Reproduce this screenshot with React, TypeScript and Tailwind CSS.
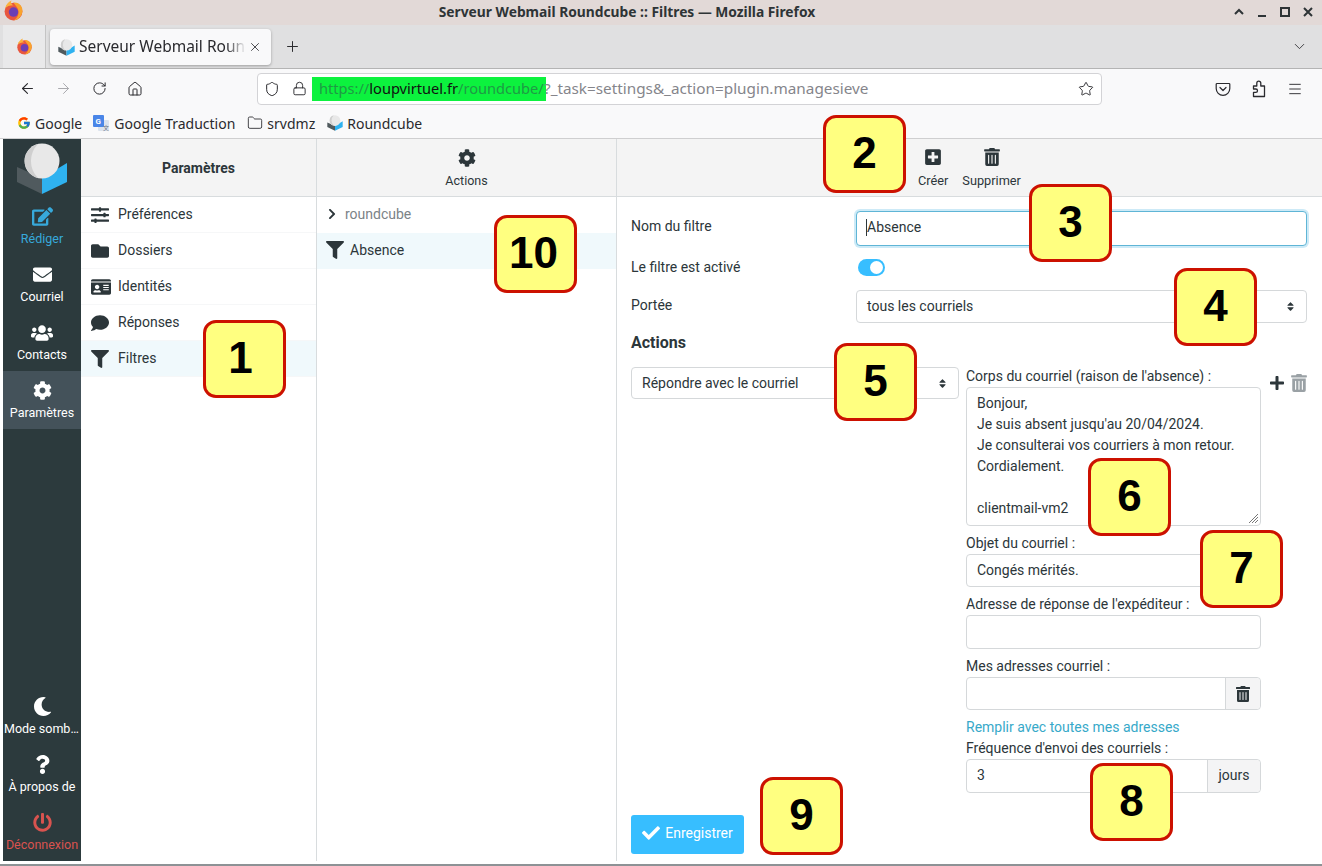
import type { ReactNode } from 'react';
import { ArrowLeft, ArrowRight, ChevronDown, Folder, Home, Lock, Menu, Plus, RotateCw, Shield, Star, X } from 'lucide-react';
import { FcGoogle } from 'react-icons/fc';
import {
    FaCheck,
    FaChevronRight,
    FaCog,
    FaComment,
    FaEdit,
    FaEnvelope,
    FaFilter,
    FaFolder,
    FaIdCard,
    FaMoon,
    FaPlus,
    FaPlusSquare,
    FaPowerOff,
    FaQuestion,
    FaSlidersH,
    FaSort,
    FaTrashAlt,
    FaUsers,
} from 'react-icons/fa';

const CubeLogo = ({ size }: { size: number }) => (
    <svg width={size} height={size} viewBox="0 0 52 52">
        <path d="M1 24 L26 35 L26 51 L1 39 Z" fill="#505a5e" />
        <path d="M51 20 L26 35 L26 51 L51 39 Z" fill="#2fb2f0" />
        <circle cx="26" cy="18" r="17.5" fill="#e8e8e8" />
        <path d="M22 1 A17.5 17.5 0 0 0 22 35 A24 24 0 0 1 22 1 Z" fill="#cfcfcf" />
    </svg>
);

const FirefoxLogo = ({ size }: { size: number }) => (
    <svg width={size} height={size} viewBox="0 0 20 20">
        <circle cx="10" cy="11" r="8.5" fill="#e8563f" />
        <path d="M10 2.5 C16 2 19 7 18.5 11 C18 15 15 19 10 19.5 C14 17 16 13 14 8 C13 6 11 4 10 2.5 Z" fill="#f9a32d" />
        <path d="M2 8 C3 4 5 2 8 0.5 C7 3 8 4 10 5 C6 5 4 6 2 8 Z" fill="#fbb13c" />
        <circle cx="10" cy="11.5" r="4.5" fill="#6b3fb5" />
    </svg>
);

const TranslateIcon = () => (
    <svg width="18" height="18" viewBox="0 0 18 18">
        <rect x="6" y="6" width="11" height="11" rx="1" fill="#dbe3ee" />
        <rect x="1" y="1" width="11" height="12" rx="1" fill="#4a86e8" />
        <text x="3.5" y="10" fontSize="8" fontWeight="700" fill="#fff" fontFamily="Roboto, sans-serif">G</text>
        <text x="11" y="15.5" fontSize="6" fill="#6b7280" fontFamily="Noto Sans CJK SC, sans-serif">文</text>
    </svg>
);

const PocketIcon = () => (
    <svg width="16" height="16" viewBox="0 0 16 16" fill="none" stroke="#2a2a2e" strokeWidth="1.2">
        <path d="M2 2.5 H14 A0.8 0.8 0 0 1 14.8 3.3 V7.5 A6.8 6.8 0 0 1 1.2 7.5 V3.3 A0.8 0.8 0 0 1 2 2.5 Z" />
        <path d="M5 6.5 L8 9.5 L11 6.5" strokeLinecap="round" strokeLinejoin="round" />
    </svg>
);

const ExtensionIcon = () => (
    <svg width="16" height="18" viewBox="0 0 16 18" fill="none" stroke="#2a2a2e" strokeWidth="1.3" className="ml-[20px]">
        <path d="M2.5 16.5 H13.5 V6 H9.8 V3.2 A2 2 0 0 0 5.8 3.2 V6 H2.5 V9 H4.8 A1.7 1.7 0 0 1 4.8 12.4 H2.5 Z" strokeLinejoin="round" />
    </svg>
);

const Badge = ({ n, className }: { n: string; className: string }) => (
    <div
        className={`absolute flex h-[78px] w-[83px] items-center justify-center rounded-[13px] border-[3px] border-[#cc1100] bg-[#ffff80] pb-[3px] text-[44px] font-bold text-black font-['Liberation_Sans',sans-serif] ${className}`}
    >
        {n}
    </div>
);

const RailItem = ({ icon, label, className = 'text-white', active = false }: { icon: ReactNode; label: string; className?: string; active?: boolean }) => (
    <div className={`flex h-[58px] w-full flex-col items-center justify-center gap-[3px] px-[1px] ${className} ${active ? 'bg-[#44525a]' : ''}`}>
        <div className="flex h-[22px] items-center text-[19px]">{icon}</div>
        <div className="w-full truncate text-center text-[12.5px] leading-[16px]">{label}</div>
    </div>
);

const MenuRow = ({ icon, label, active = false }: { icon: ReactNode; label: string; active?: boolean }) => (
    <div className={`flex h-9 items-center border-b border-[#f6f7f8] pl-[10px] text-[14px] text-[#2c363a] ${active ? 'bg-[#f0f9fc]' : ''}`}>
        <div className="flex w-[27px] justify-start text-[18px]">{icon}</div>
        <span>{label}</span>
    </div>
);

const fieldClass = 'flex items-center rounded-[4px] border border-[#d5d8da] bg-white px-[10px] text-[14px] text-[#2c363a]';

const SelectBox = ({ label, className }: { label: string; className: string }) => (
    <div className={`${fieldClass} justify-between ${className}`}>
        <span>{label}</span>
        <FaSort className="text-[11px] text-[#2c363a]" />
    </div>
);

const FieldLabel = ({ children, className = '' }: { children: ReactNode; className?: string }) => (
    <div className={`text-[14px] leading-[17px] text-[#2c363a] ${className}`}>{children}</div>
);

const App = () => {
    const bookmarks = [
        { icon: <FcGoogle size={14} />, label: 'Google', width: 'mr-[10px]' },
        { icon: <TranslateIcon />, label: 'Google Traduction', width: 'mr-[12px]' },
        { icon: <Folder size={16} strokeWidth={1.3} />, label: 'srvdmz', width: 'mr-[12px]' },
        { icon: <CubeLogo size={16} />, label: 'Roundcube', width: '' },
    ];

    return (
        <div className="relative flex h-[866px] w-[1322px] flex-col overflow-hidden bg-white font-['Roboto',sans-serif]">
            {/* Window title bar */}
            <div className="relative flex h-[25px] shrink-0 items-center justify-center bg-[#e2d9d7] pr-[68px] font-['Noto_Sans',sans-serif] text-[13.8px] font-bold text-[#2e3436]">
                Serveur Webmail Roundcube :: Filtres — Mozilla Firefox
                <div className="absolute left-[3px] top-0">
                    <FirefoxLogo size={21} />
                </div>
                <div className="absolute right-[8px] top-[6px] flex items-center gap-[11px] text-[#2e3436]">
                    <svg width="12" height="12" viewBox="0 0 12 12" fill="none" stroke="currentColor" strokeWidth="2"><path d="M2 8 L6 4 L10 8" /></svg>
                    <svg width="12" height="12" viewBox="0 0 12 12" fill="none" stroke="currentColor" strokeWidth="2"><path d="M2 10 H10" /></svg>
                    <svg width="12" height="12" viewBox="0 0 12 12" fill="none" stroke="currentColor" strokeWidth="2"><rect x="2" y="2" width="8" height="8" /></svg>
                    <svg width="12" height="12" viewBox="0 0 12 12" fill="none" stroke="currentColor" strokeWidth="2"><path d="M2 2 L10 10 M10 2 L2 10" /></svg>
                </div>
            </div>

            {/* Tab strip */}
            <div className="flex h-[44px] shrink-0 items-center border-b border-[#b4b4b4] bg-[#e0e0e1] pl-[3px] font-['Noto_Sans',sans-serif] text-[15.5px] text-[#2a2a2e]">
                <div className="flex h-full w-[43px] items-center justify-center border-r border-[#c4c4c4] bg-[#e9e9ea]">
                    <FirefoxLogo size={17} />
                </div>
                <div className="ml-[4px] flex h-[36px] w-[221px] items-center rounded-[4px] bg-[#f9f9fa] pl-[8px] pt-[1px] shadow-[0_1px_3px_rgba(0,0,0,0.3)]">
                    <CubeLogo size={17} />
                    <span className="ml-[4px] w-[167px] overflow-hidden whitespace-nowrap [mask-image:linear-gradient(to_right,black_88%,transparent)]">Serveur Webmail Roundcube</span>
                    <X size={14} strokeWidth={1.4} className="ml-[2px]" />
                </div>
                <Plus size={17} strokeWidth={1.4} className="ml-[13px]" />
                <ChevronDown size={17} strokeWidth={1.2} className="ml-auto mr-[14px]" />
            </div>

            {/* Navigation toolbar */}
            <div className="flex h-[39px] shrink-0 items-center bg-[#f9f9fa] pl-[19px] text-[#2a2a2e]">
                <ArrowLeft size={17} strokeWidth={1.5} />
                <ArrowRight size={17} strokeWidth={1.4} className="ml-[19px] text-[#a8a8ac]" />
                <RotateCw size={15} strokeWidth={1.6} className="ml-[20px]" />
                <Home size={16} strokeWidth={1.5} className="ml-[20px]" />
                <div className="ml-[114px] flex h-[32px] w-[845px] items-center rounded-[4px] border border-[#d3d3d6] bg-white pl-[6px] font-['Noto_Sans',sans-serif] text-[#85858b]">
                    <Shield size={16} strokeWidth={1.5} className="text-[#2a2a2e]" />
                    <Lock size={15} strokeWidth={1.5} className="ml-[12px] text-[#2a2a2e]" />
                    <div className="ml-[5px] flex h-[24px] items-center whitespace-nowrap">
                        <span className="flex h-full w-[234px] items-center whitespace-nowrap bg-[#0cf23e] pl-[7px] text-[14.6px]">
                            <span className="text-[#1f9a45]">https://</span>
                            <span className="text-[#111]">loupvirtuel.fr</span>
                            <span className="text-[#1f9a45]">/roundcube/</span>
                        </span>
                        <span className="-ml-[2px] text-[15.3px]">?_task=settings&amp;_action=plugin.managesieve</span>
                    </div>
                    <Star size={16} strokeWidth={1.4} className="ml-auto mr-[7px] text-[#2a2a2e]" />
                </div>
                <div className="ml-[113px] flex items-center">
                    <PocketIcon />
                    <ExtensionIcon />
                    <Menu size={16} strokeWidth={1.4} className="ml-[20px]" />
                </div>
            </div>

            {/* Bookmarks */}
            <div className="flex h-[31px] shrink-0 items-center border-b border-[#cfcfd0] bg-[#f9f9fa] pl-[17px] font-['Noto_Sans',sans-serif] text-[14px] text-[#2a2a2e]">
                {bookmarks.map((b) => (
                    <div key={b.label} className={`flex items-center gap-[4px] ${b.width}`}>
                        {b.icon}
                        <span>{b.label}</span>
                    </div>
                ))}
            </div>

            {/* Roundcube */}
            <div className="flex h-[722px] shrink-0 pl-[3px]">
                <div className="flex w-[78px] shrink-0 flex-col bg-[#2c3a3d]">
                    <div className="flex h-[58px] items-center justify-center pt-[2px]">
                        <CubeLogo size={52} />
                    </div>
                    <RailItem icon={<FaEdit className="text-[21px]" />} label="Rédiger" className="text-[#37a9db]" />
                    <RailItem icon={<FaEnvelope />} label="Courriel" />
                    <RailItem icon={<FaUsers className="text-[22px]" />} label="Contacts" />
                    <RailItem icon={<FaCog />} label="Paramètres" active />
                    <div className="mt-auto">
                        <RailItem icon={<FaMoon />} label="Mode sombre" />
                        <RailItem icon={<FaQuestion />} label="À propos de" />
                        <RailItem icon={<FaPowerOff />} label="Déconnexion" className="text-[#d9534f]" />
                    </div>
                </div>

                <div className="flex w-[236px] shrink-0 flex-col border-r border-[#d8dcde]">
                    <div className="flex h-[58px] items-center justify-center border-b border-[#d8dcde] bg-[#f4f4f4] pt-[2px] text-[14px] font-bold text-[#2c363a]">Paramètres</div>
                    <MenuRow icon={<FaSlidersH />} label="Préférences" />
                    <MenuRow icon={<FaFolder />} label="Dossiers" />
                    <MenuRow icon={<FaIdCard className="text-[20px]" />} label="Identités" />
                    <MenuRow icon={<FaComment />} label="Réponses" />
                    <MenuRow icon={<FaFilter />} label="Filtres" active />
                </div>

                <div className="flex w-[300px] shrink-0 flex-col border-r border-[#d8dcde]">
                    <div className="flex h-[58px] flex-col items-center justify-center border-b border-[#d8dcde] bg-[#f4f4f4] pt-[4px] text-[12.5px] text-[#2c363a]">
                        <FaCog className="mb-[5px] text-[18px]" />
                        Actions
                    </div>
                    <div className="flex h-9 items-center pb-[2px] pl-[9px] text-[14px] text-[#7b8387]">
                        <FaChevronRight className="mr-[7px] text-[12px] text-[#2c363a]" />
                        roundcube
                    </div>
                    <div className="flex h-9 items-center bg-[#f0f9fc] pb-[2px] pl-[9px] text-[14px] text-[#2c363a]">
                        <FaFilter className="mr-[6px] text-[18px]" />
                        Absence
                    </div>
                </div>

                <div className="flex min-w-0 flex-1 flex-col">
                    <div className="flex h-[58px] shrink-0 items-center justify-start gap-[14px] border-b border-[#d8dcde] bg-[#f4f4f4] pl-[301px] pt-[4px] text-[12.75px] text-[#2c363a]">
                        <div className="flex flex-col items-center">
                            <FaPlusSquare className="mb-[5px] text-[18px]" />
                            Créer
                        </div>
                        <div className="flex flex-col items-center">
                            <FaTrashAlt className="mb-[5px] text-[18px]" />
                            Supprimer
                        </div>
                    </div>

                    <div className="flex flex-1 flex-col pl-[14px] pr-[15px]">
                        <div className="mt-[14px] flex items-center">
                            <FieldLabel className="w-[225px] pb-[4px]">Nom du filtre</FieldLabel>
                            <div className="flex h-[35px] flex-1 items-center rounded-[4px] border border-[#5fb5d6] bg-white pb-[2px] pl-[9px] text-[14px] text-[#2c363a] shadow-[0_0_0_2px_#cdeaf7]">
                                <span className="h-[17px] border-l border-[#2c363a]" />
                                Absence
                            </div>
                        </div>
                        <div className="mt-[12px] flex items-center">
                            <FieldLabel className="w-[225px] pt-[1px]">Le filtre est activé</FieldLabel>
                            <div className="ml-[2px] flex h-[17px] w-[27px] items-center justify-end rounded-full bg-[#37beff] pr-[2px]">
                                <div className="h-[13px] w-[13px] rounded-full bg-white" />
                            </div>
                        </div>
                        <div className="mt-[14px] flex items-center">
                            <FieldLabel className="w-[225px] pb-[3px]">Portée</FieldLabel>
                            <SelectBox label="tous les courriels" className="h-[33px] flex-1" />
                        </div>
                        <div className="mt-[10px] text-[16px] font-bold leading-[20px] text-[#2c363a]">Actions</div>

                        <div className="mt-[14px] flex items-start">
                            <SelectBox label="Répondre avec le courriel" className="h-[32px] w-[328px] shrink-0" />
                            <div className="ml-[7px] w-[295px] shrink-0">
                                <FieldLabel className="mt-[1px]">Corps du courriel (raison de l'absence) :</FieldLabel>
                                <div className="relative mt-[2px] h-[139px] rounded-[4px] border border-[#d5d8da] bg-white px-[10px] py-[5px] text-[14px] leading-[21px] text-[#2c363a]">
                                    <div>Bonjour,</div>
                                    <div>Je suis absent jusqu'au 20/04/2024.</div>
                                    <div>Je consulterai vos courriers à mon retour.</div>
                                    <div>Cordialement.</div>
                                    <div className="h-[21px]" />
                                    <div>clientmail-vm2</div>
                                    <svg className="absolute bottom-[1px] right-[1px]" width="11" height="11" viewBox="0 0 11 11" stroke="#777" strokeWidth="1">
                                        <path d="M1 10 L10 1 M4 10 L10 4 M7 10 L10 7" />
                                    </svg>
                                </div>
                                <FieldLabel className="mt-[9px]">Objet du courriel :</FieldLabel>
                                <div className={`${fieldClass} mt-[2px] h-[33px]`}>Congés mérités.</div>
                                <FieldLabel className="mt-[9px]">Adresse de réponse de l'expéditeur :</FieldLabel>
                                <div className={`${fieldClass} mt-[2px] h-[34px]`} />
                                <FieldLabel className="mt-[9px]">Mes adresses courriel :</FieldLabel>
                                <div className="mt-[2px] flex h-[33px] rounded-[4px] border border-[#d5d8da] bg-white">
                                    <div className="flex-1" />
                                    <div className="flex w-[35px] items-center justify-center rounded-r-[4px] border-l border-[#d5d8da] bg-[#f4f4f5] text-[16px] text-[#2c363a]">
                                        <FaTrashAlt />
                                    </div>
                                </div>
                                <div className="mt-[9px] text-[14px] leading-[17px] text-[#37a9c9]">Remplir avec toutes mes adresses</div>
                                <FieldLabel className="mt-[4px]">Fréquence d'envoi des courriels :</FieldLabel>
                                <div className="mt-[2px] flex h-[34px] rounded-[4px] border border-[#d5d8da] bg-white text-[14px] text-[#2c363a]">
                                    <div className="flex flex-1 items-center pb-[2px] pl-[10px]">3</div>
                                    <div className="flex w-[53px] items-center justify-center rounded-r-[4px] border-l border-[#d5d8da] bg-[#f4f4f5] pb-[2px]">jours</div>
                                </div>
                            </div>
                            <div className="ml-[8px] mt-[7px] flex items-center gap-[5px]">
                                <FaPlus className="text-[16px] text-[#2c363a]" />
                                <FaTrashAlt className="text-[18px] text-[#9aa1a5]" />
                            </div>
                        </div>

                        <div className="mt-auto mb-[7px] flex h-[39px] w-[113px] items-center justify-center gap-[5px] rounded-[3px] bg-[#37beff] pb-[3px] text-[14px] text-white">
                            <FaCheck className="text-[18px]" />
                            Enregistrer
                        </div>
                    </div>
                </div>
            </div>

            <div className="mt-[3px] h-[2px] bg-[#8d9295]" />

            <Badge n="1" className="left-[203px] top-[320px] pr-[8px]" />
            <Badge n="2" className="left-[823px] top-[115px]" />
            <Badge n="3" className="left-[1029px] top-[184px]" />
            <Badge n="4" className="left-[1174px] top-[268px]" />
            <Badge n="5" className="left-[834px] top-[343px]" />
            <Badge n="6" className="left-[1088px] top-[458px]" />
            <Badge n="7" className="left-[1200px] top-[530px]" />
            <Badge n="8" className="left-[1090px] top-[763px]" />
            <Badge n="9" className="left-[760px] top-[777px]" />
            <Badge n="10" className="left-[494px] top-[215px] pr-[4px]" />
        </div>
    );
};

export default App;
